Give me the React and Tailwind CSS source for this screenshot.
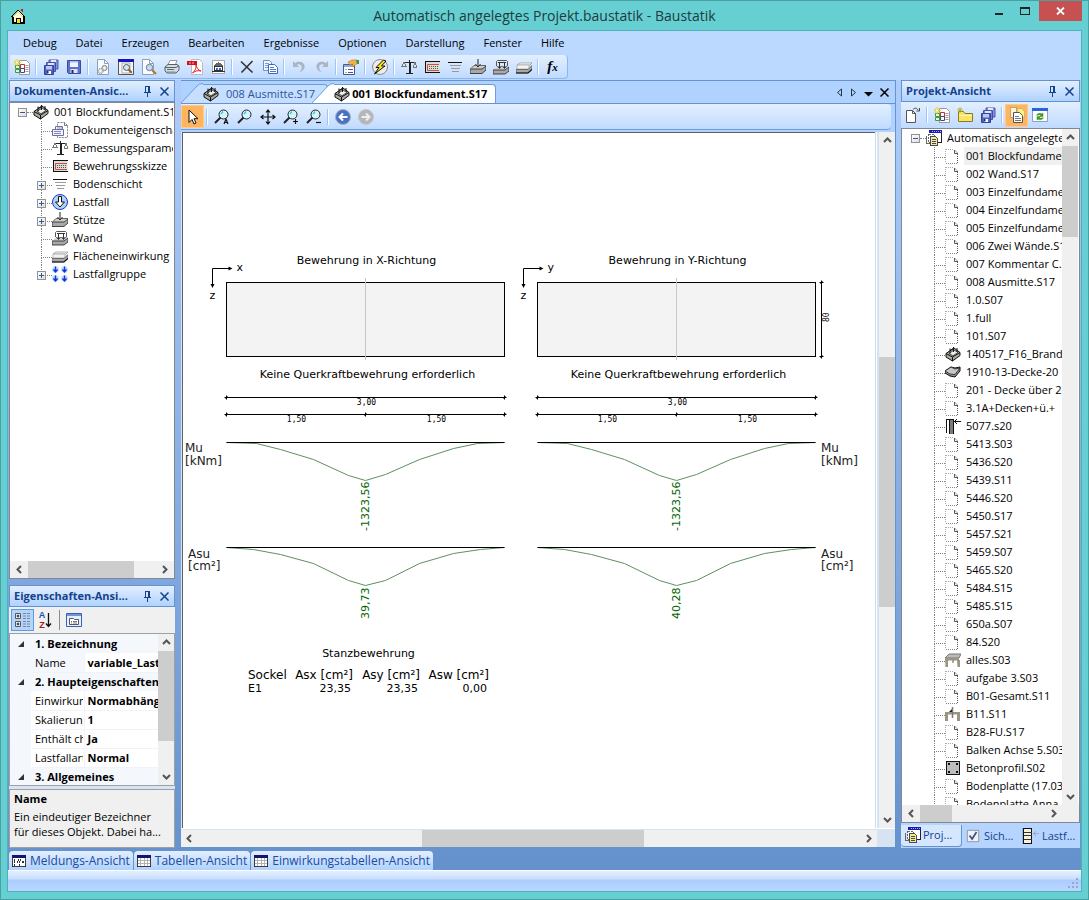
import { Fragment } from "react";

const Icon = ({ children, size = 16 }) => (
  <svg width={size} height={size} viewBox="0 0 16 16" className="shrink-0" aria-hidden="true">
    {children}
  </svg>
);

const icons = {
  house: (
    <g shapeRendering="crispEdges">
      <path d="M2 9L8 3l6 6v6H3V9z" fill="#fffbe0" />
      <path d="M1 9L8 2l7 7M3 8v7h11V8" fill="none" stroke="#000" strokeWidth="1.3" />
      <path d="M2.500 9.500L8 4l5.500 5.500" fill="none" stroke="#f4e13c" strokeWidth="1" />
      <path d="M11 1h2v4l-2-2z" fill="#e01010" />
      <path d="M6 10h4v5H6z" fill="#f8e000" stroke="#000" />
    </g>
  ),
  newDoc: (
    <g>
      <path d="M5.500 1.500h7l3 3v11h-10z" fill="#fff" stroke="#999" />
      <path d="M11.500 6.500h3M11.500 8.500h3M11.500 10.500h3M11.500 12.500h3" stroke="#999" />
      <path d="M1.500 6.500h4v3h-4zM1.500 10.500h4v3h-4z" fill="#e9f6e4" stroke="#3f9a3a" />
      <path d="M6.500 5.500h4v4h-4z" fill="#fff" stroke="#b33" />
      <path d="M6.500 9.500h4v4h-4z" fill="#f4f5ff" stroke="#447" />
      <path d="M3 0v7M0 3.500h7M.5 1l5 5M5.500 1l-5 5" stroke="#e6d21a" />
      <circle cx="3" cy="3.500" r="1" fill="#fff" />
    </g>
  ),
  saveAll: (
    <g>
      <path d="M6 1h9v9H6z" fill="#8592dd" stroke="#4a57aa" />
      <path d="M8 1h5v3H8z" fill="#e7ebfb" />
      <path d="M3.500 3.500h9v9h-9z" fill="#7583d4" stroke="#4350a4" />
      <path d="M5 4h6v3H5z" fill="#dfe5fa" />
      <path d="M1.500 6.500h9v9h-9z" fill="#4f60bd" stroke="#354194" />
      <path d="M3 7h6v3.500H3z" fill="#b9c8f2" />
      <path d="M4 12h4v3H4z" fill="#fff" />
      <path d="M4 12h1.500v2.500H4z" fill="#222c66" />
    </g>
  ),
  save: (
    <g>
      <path d="M1.500 1.500h13v13h-12l-1-1z" fill="#5f72d2" stroke="#3c4aa4" />
      <path d="M4 2h8v6H4z" fill="#f2f4fd" />
      <path d="M4 2h8v1.500H4z" fill="#aebced" />
      <path d="M4.500 10h7v4h-7z" fill="#dfe3ef" />
      <path d="M5.500 11h2v3h-2z" fill="#222c66" />
    </g>
  ),
  docGear: (
    <g>
      <path d="M2.500.5h7l4 4v11h-11z" fill="#f8fbff" stroke="#8ca0bd" />
      <path d="M9.500.5v4h4" fill="none" stroke="#8ca0bd" />
      <circle cx="9.500" cy="9" r="2.600" fill="#d8d8d8" stroke="#8a8a8a" />
      <circle cx="9.500" cy="9" r="1" fill="#fff" />
      <circle cx="5.500" cy="12" r="2.600" fill="#d8d8d8" stroke="#8a8a8a" strokeDasharray="1.500 1" />
      <circle cx="5.500" cy="12" r="1" fill="#fff" />
    </g>
  ),
  preview: (
    <g>
      <path d="M.5.5h15v15H.5z" fill="#f4f4f4" stroke="#555" />
      <path d="M0 0h16v3H0z" fill="#1414c8" />
      <path d="M4 4h8v10H4z" fill="#fff" stroke="#aaa" />
      <circle cx="8.500" cy="8.500" r="3" fill="#cfe6f8" stroke="#555" />
      <path d="M10.700 10.700l3 3" stroke="#8a5a2a" strokeWidth="2" />
    </g>
  ),
  docFind: (
    <g>
      <path d="M1.500.5h7l4 4v11h-11z" fill="#f8fbff" stroke="#8ca0bd" />
      <path d="M8.500.5v4h4" fill="none" stroke="#8ca0bd" />
      <circle cx="8.500" cy="8.500" r="3.200" fill="#c3dcf2" stroke="#6b7c90" />
      <path d="M11 11l4 4" stroke="#b8772c" strokeWidth="2.200" />
    </g>
  ),
  print: (
    <g>
      <path d="M6 1.500h7l-2 5H3.500z" fill="#fff" stroke="#8a9bb0" />
      <path d="M1 8l3-2.500h9L15 7v4l-3 3H3l-2-2z" fill="#d6dde6" stroke="#56616f" />
      <path d="M1 8.500h11L15 6.500" fill="none" stroke="#56616f" />
      <path d="M3 10.500h7" stroke="#4d7b3e" />
      <path d="M2.500 13h9" stroke="#7f8894" />
    </g>
  ),
  pdf: (
    <g>
      <path d="M4.500.5h8l3 3v12h-11z" fill="#fff" stroke="#b9b9c9" />
      <path d="M0 2h10v4H0z" fill="#d4141a" />
      <path d="M2 4h6" stroke="#f6b0b0" strokeDasharray="2 1" />
      <path d="M9 6c1 3 2 5 5 6-3-.8-6 0-8.500 2C8 12 9.500 9 9 6z" fill="none" stroke="#e02020" />
    </g>
  ),
  printHouse: (
    <g shapeRendering="crispEdges">
      <path d="M2.500 1.500h12v13h-12z" fill="#fff" stroke="#aaa" />
      <path d="M3 7l5.500-4L14 7z" fill="#666" />
      <path d="M4.500 7.500h8v4h-8z" fill="#fff" stroke="#333" />
      <path d="M6 9h2v2H6zM9 9h2v2H9z" fill="#3567e0" />
      <path d="M2 12h13v1H2z" fill="#333" />
    </g>
  ),
  cut: <path d="M2 2.500l11.500 11M13.500 2L2.500 13.500" stroke="#333" strokeWidth="1.600" />,
  copy: (
    <g>
      <path d="M1.500 1.500h6l2 2v8h-8z" fill="#f0f6ff" stroke="#6f8fc7" />
      <path d="M3 4.500h4M3 6.500h4M3 8.500h3" stroke="#7c9bd2" />
      <path d="M6.500 5.500h6l3 3v6h-9z" fill="#fafdff" stroke="#3e66b4" />
      <path d="M8 8.500h4M8 10.500h6M8 12.500h6" stroke="#4f79c6" />
    </g>
  ),
  undo: (
    <path d="M2 2v6h6L5.800 5.800C8 4.500 10.800 5.500 10.800 8.200c0 2.300-1.200 3.800-3 5.300 4-1.200 5.800-3.300 5.800-6 0-4-5.600-6.200-9.400-3.300z" fill="#a9b4c4" />
  ),
  redo: (
    <path d="M14 2v6H8l2.200-2.200C8 4.500 5.200 5.500 5.200 8.200c0 2.300 1.200 3.800 3 5.300-4-1.200-5.800-3.300-5.800-6 0-4 5.600-6.200 9.400-3.300z" fill="#a9b4c4" />
  ),
  props: (
    <g>
      <path d="M.5 5.500h11v10H.5z" fill="#fff" stroke="#44588c" />
      <path d="M1 6h10v2H1z" fill="#8fa9dc" />
      <path d="M2.500 10.500h1M2.500 13.500h1M5 10.500h5M5 13.500h5" stroke="#44588c" />
      <path d="M5 3l4-2h5l1 3-3 2-2 2-1-1 1-2-3 1z" fill="#f0b34c" stroke="#b0762a" strokeWidth=".6" />
      <path d="M13 1h3v4h-2z" fill="#42963f" />
    </g>
  ),
  flash: (
    <g>
      <circle cx="8" cy="8" r="7.500" fill="#ececec" stroke="#8b8b8b" />
      <path d="M11.500 1L4 8.500h3L2.500 15 13 7H9.500L14 2z" fill="#ffe11a" stroke="#111" />
    </g>
  ),
  scale: (
    <g shapeRendering="crispEdges" fill="none" stroke="#222">
      <path d="M3 3.500h11M8.500 1v13M5 14.500h7" strokeWidth="1" />
      <path d="M9.500 3v11" />
      <path d="M3 3.500L1 7M3 3.500L5 7M0 7.500h6" stroke="#777" />
      <path d="M14 3.500L12 8M14 3.500L16 8M12 8.500h4" stroke="#777" />
    </g>
  ),
  rebar: (
    <g>
      <path d="M1.500 2.500h14v11h-14z" fill="#dcdcd6" />
      <path d="M1 2.500h15M1 13.500h15M1.500 2v12" stroke="#111" fill="none" />
      <path d="M15 5.500H3.500v6H15" stroke="#c8503c" fill="none" />
      <path d="M5 7.500h10M5 9.500h10" stroke="#555" strokeDasharray="1 1" />
    </g>
  ),
  layers: (
    <g shapeRendering="crispEdges">
      <path d="M1 3.500h14" stroke="#111" />
      <path d="M3 6.500h11M4 9.500h9M5 12.500h7" stroke="#999" />
    </g>
  ),
  column: (
    <g>
      <path d="M0 10l4-4h12l-4 4z" fill="#cdcdcd" />
      <path d="M0 10h12l4-3v4l-4 3.500H0z" fill="#a8a8a8" stroke="#222" strokeWidth=".8" />
      <path d="M1 9.500l3-3h12" fill="none" stroke="#666" />
      <path d="M8 0v8M5.500 5L8 8l2.500-3" stroke="#222" fill="#fff" />
    </g>
  ),
  wall: (
    <g>
      <path d="M0 11l5-4h11l-4 4z" fill="#cdcdcd" />
      <path d="M0 11h12l4-3v4l-4 3H0z" fill="#a8a8a8" stroke="#222" strokeWidth=".8" />
      <path d="M3.500 7V2.500l1-1h9l1 1V7" fill="none" stroke="#555" />
      <path d="M5 3.500h8M6.500 4v5M4.500 7l2 2.500L8.500 7M11.500 4v5M9.500 7l2 2.500 2-2.500" fill="none" stroke="#333" />
    </g>
  ),
  area: (
    <g>
      <path d="M1 6l3-2h12l-2 2z" fill="#fff" stroke="#999" strokeWidth=".8" />
      <path d="M1 6h12v4H1z" fill="#f2f2f2" stroke="#aaa" strokeWidth=".8" />
      <path d="M0 10.500h12l4-4v3.500l-4 4H0z" fill="#a8a8a8" stroke="#555" strokeWidth=".8" />
      <path d="M0 14h12l4-3.500" fill="none" stroke="#111" strokeWidth="1.200" />
    </g>
  ),
  block: (
    <g>
      <path d="M1 7.500L9 2l6 4.500v3L7.500 15 1 11z" fill="#a8a8a0" stroke="#111" />
      <path d="M1 7.500L7.500 11 15 6.500M7.500 11v4" stroke="#111" fill="none" />
      <path d="M4 7.500L9 4l4 2.500-5 3.200z" fill="#f0f0ea" stroke="#333" strokeWidth=".8" />
      <path d="M5 2.500v5M8.500 1v5M12 2v4M5 4.500l3.500-2" stroke="#111" strokeWidth="1" />
    </g>
  ),
  docProps: (
    <g>
      <path d="M5.500.5h7l3 3v12h-10z" fill="#fff" stroke="#888" strokeDasharray="2 1" />
      <path d="M12.500.5v3h3" fill="none" stroke="#777" />
      <path d="M3.500 4.500h7v3h-7z" fill="#fff" stroke="#6a6fa0" />
      <path d="M.5 7.500h11v6H.5z" fill="#f2f3ff" stroke="#6a6fa0" />
      <path d="M2 9.500h7M2 11.500h7M5 6h5" stroke="#8388bc" />
    </g>
  ),
  load: (
    <g>
      <circle cx="8" cy="8" r="7.500" fill="#aed2f8" stroke="#2438c8" />
      <path d="M6.500 2.500h3V8h3L8 13 3.500 8h3z" fill="#fff" stroke="#111" />
    </g>
  ),
  loadGroup: (
    <g>
      {[[3.500, 3.500], [12.500, 3.500], [3.500, 12.500], [12.500, 12.500]].map(([x, y]) => (
        <g key={`${x}-${y}`}>
          <circle cx={x} cy={y} r="3.300" fill="#b9dcff" />
          <path d={`M${x} ${y - 3}v5M${x - 2} ${y}l2 2.500 2-2.500`} fill="none" stroke="#1830d8" strokeWidth="1.300" />
        </g>
      ))}
    </g>
  ),
  pointer: <path d="M4 1v12.500l3-3 2 4.500 2-1-2-4.300h4z" fill="#fff" stroke="#111" />,
  move: (
    <path d="M8 1.500v13M1.500 8h13M6 3.500l2-2.500 2 2.500M6 12.500L8 15l2-2.500M3.500 6L1 8l2.500 2M12.500 6L15 8l-2.500 2" fill="none" stroke="#111" strokeWidth="1.200" />
  ),
  back: (
    <g>
      <circle cx="8" cy="8" r="7.500" fill="#4a72c4" stroke="#a8aebb" />
      <path d="M12.500 8H5M8 4.500L4.500 8 8 11.500" fill="none" stroke="#fff" strokeWidth="2" />
    </g>
  ),
  forward: (
    <g>
      <circle cx="8" cy="8" r="7.500" fill="#b4b6ba" stroke="#c4c6ca" />
      <path d="M3.500 8H11M8 4.500L11.500 8 8 11.500" fill="none" stroke="#eee" strokeWidth="2" />
    </g>
  ),
  openDoc: (
    <g>
      <path d="M1.500 3.500h6l3 3v9h-9z" fill="#fff" stroke="#555" />
      <path d="M7.500 3.500v3h3" fill="none" stroke="#555" />
      <path d="M8 2.500c2-2 4-1.500 5 .5M14.500 1v3h-3" fill="none" stroke="#444" />
    </g>
  ),
  newFolder: (
    <g>
      <path d="M1.500 4.500h5l1.500 2h7.500v8h-14z" fill="#f7e468" stroke="#8d7a1c" />
      <path d="M2 8.500h13" stroke="#fff6b0" />
      <path d="M3 0v6M0 3h6M1 1l4 4M5 1L1 5" stroke="#b8ab2b" strokeWidth=".8" />
    </g>
  ),
  docs: (
    <g>
      <path d="M1.500.5h6v10h-6z" fill="#fff3c8" stroke="#777" strokeDasharray="1 1" />
      <path d="M8.500 1.500h4l3 3v6h-7z" fill="#fff27a" stroke="#999" strokeDasharray="1 1" />
      <path d="M4.500 5.500h6l3 3v7h-9z" fill="#fff" stroke="#555" />
      <path d="M6 9.500h4M6 11.500h6M6 13.500h6" stroke="#777" />
    </g>
  ),
  refresh: (
    <g>
      <path d="M.5 1.500h15v13H.5z" fill="#fff" stroke="#8aa0cc" />
      <path d="M0 1h16v3H0z" fill="#2f62d6" />
      <path d="M4.500 8.500C5 6.500 8 5.500 10 7l1-1v3.500H7.500L9 8M11.500 10.500c-.5 2-3.500 3-5.500 1.500l-1 1V9.500h3.500L7 11" fill="#3b9a1e" stroke="#3b9a1e" strokeWidth=".5" />
    </g>
  ),
  project: (
    <g shapeRendering="crispEdges">
      <path d="M3 .5h13v11H3z" fill="#fff" />
      <path d="M15.500 0v12H11" fill="none" stroke="#222" />
      <path d="M3 0h13v3H3z" fill="#1a1ab4" />
      <path d="M6 1.500h9" stroke="#9db4ff" strokeDasharray="1 1" />
      <path d="M2.500 4.500h6v8h-6z" fill="#fff" stroke="#666" strokeDasharray="2 1" />
      <path d="M4.500 6.500h5l2 2v7h-7z" fill="#f7f06a" stroke="#44447a" />
      <path d="M6 9.500h4M6 11.500h4M6 13.500h4" stroke="#44447a" />
      <path d="M.5 6v7.500H4" stroke="#666" fill="none" />
    </g>
  ),
  file: (
    <g fill="none">
      <path d="M.5 1v14" stroke="#aaa" strokeDasharray="1 1" />
      <path d="M1 1.500h8" stroke="#aaa" strokeDasharray="1 1" />
      <path d="M1 15.500h12" stroke="#888" strokeDasharray="1 1" />
      <path d="M12.500 6v9" stroke="#555" strokeDasharray="1 1" />
      <path d="M9.500 2l3 3" stroke="#999" />
      <path d="M9.500 2v3.500H13" stroke="#555" />
    </g>
  ),
  slab: (
    <g>
      <path d="M0 7l6-4 4 1 5-1v4l-5 6-5-1-5-3z" fill="#8d8d8d" stroke="#111" />
      <path d="M0 7l5 3 5 .5L15 4l-5 1-4-2z" fill="#c6c6c6" stroke="#222" strokeWidth=".8" />
    </g>
  ),
  post: (
    <g shapeRendering="crispEdges">
      <path d="M1.500 1v14" stroke="#111" />
      <path d="M4 1h4v15H4z" fill="#7a7a7a" stroke="#111" />
      <path d="M2 1.500h2M9 3.500h7M9 3.500l3-2M9 3.500l3 2" stroke="#111" />
    </g>
  ),
  frame: (
    <g>
      <path d="M0 6l4-4h12l-2 4z" fill="#bbb" stroke="#777" />
      <path d="M0 6h14v2.500H3V15H.5zM12 8h3v7h-2.500" fill="#9b9684" />
      <path d="M8 8v3" stroke="#555" />
    </g>
  ),
  frameArrow: (
    <g>
      <path d="M0 6h15v9h-3V8.500H3V15H0z" fill="#9b9684" />
      <path d="M4 6l4-4v4z" fill="#111" />
      <path d="M7.500 1v11" stroke="#777" strokeWidth="1.500" />
    </g>
  ),
  profile: (
    <g shapeRendering="crispEdges">
      <path d="M1.500 1.500h13v13h-13z" fill="#bdbdbd" stroke="#111" />
      <path d="M3 3h2v2H3zM11 3h2v2h-2zM3 11h2v2H3zM11 11h2v2h-2z" fill="#111" />
    </g>
  ),
  check: (
    <g>
      <path d="M1.500 1.500h13v13h-13z" fill="#eef2f8" stroke="#8a8f98" />
      <path d="M4 7.500l3 4 5-8" fill="none" stroke="#3c4f86" strokeWidth="2" />
    </g>
  ),
  loads: (
    <g shapeRendering="crispEdges">
      <path d="M.5.5h8v15h-8z" fill="#f6f1d8" stroke="#111" />
      <path d="M1 4.500h8M1 7.500h8M1 11.500h8" stroke="#333" strokeWidth="1.500" />
      <path d="M10 5.500h6M10 5.500l3-2M10 5.500l3 2" stroke="#9aa7bd" />
    </g>
  ),
  messages: (
    <g shapeRendering="crispEdges">
      <path d="M.5 1.500h15v13H.5z" fill="#fff" stroke="#222" />
      <path d="M0 1h16v3H0z" fill="#14146e" />
      <path d="M2 6.500h3M7 6.500h3M12 6.500h2M2 9.500h2M6 9.500h3M11 9.500h3M2 12.500h4M8 12.500h2M12 12.500h2" stroke="#333" strokeWidth="2" strokeDasharray="1 1" />
    </g>
  ),
  table: (
    <g shapeRendering="crispEdges">
      <path d="M.5 1.500h15v13H.5z" fill="#fff" stroke="#222" />
      <path d="M0 1h16v3H0z" fill="#14146e" />
      <path d="M4.500 4v10M8.500 4v10M12.500 4v10M1 7.500h14M1 10.500h14" stroke="#aaa" />
    </g>
  ),
  category: (
    <g>
      <path d="M.5 1.500h5v5h-5zM.5 9.500h5v5h-5z" fill="#fff" stroke="#556" />
      <path d="M1.500 4h3M3 2.500v3M1.500 12h3M3 10.500v3" stroke="#111" />
      <path d="M8 1.500h3M12 1.500h3M8 4h3M12 4h3M8 6.500h3M12 6.500h3M8 9.500h3M12 9.500h3M8 12h3M12 12h3M8 14.500h3M12 14.500h3" stroke="#7785a8" />
    </g>
  ),
  page: (
    <g>
      <path d="M.5 1.500h15v13H.5z" fill="#e8effc" stroke="#3a5fb4" />
      <path d="M1 2h14v2H1z" fill="#6f95de" />
      <path d="M3.500 6.500h4l1 1h4v5h-9z" fill="#fff" stroke="#556" />
      <path d="M5 9.500h1M7 9.500h4M5 11h1M7 11h4" stroke="#556" strokeWidth=".8" />
    </g>
  ),
};

const Lens = ({ mark }) => (
  <Icon>
    <circle cx="9.500" cy="5.500" r="4.500" fill="#d4f4fa" stroke="#222" />
    <path d="M7 5l2-2.500" stroke="#3cc8dc" strokeWidth="1.500" />
    <path d="M6.500 8.500L1 14" stroke="#222" strokeWidth="2" />
    {mark && <path d={mark} fill="none" stroke="#111" strokeWidth="1.200" />}
  </Icon>
);

const lensMarks = {
  all: "M10 15l2-5 2 5M11 13.500h2.500",
  none: "",
  plus: "M12.500 10v5M10 12.500h5",
  minus: "M10 13.500h5",
};

const ToolButton = ({ label, active, children }) => (
  <button
    type="button"
    aria-label={label}
    className={`flex h-[23px] w-[23px] shrink-0 items-center justify-center ${
      active ? "bg-[#ffb45e] border border-[#ffc98a]" : "hover:bg-[#ffe3a8]"
    }`}
  >
    {children}
  </button>
);

const Separator = () => (
  <div className="flex h-4 w-[6px] shrink-0 justify-center">
    <div className="w-px bg-[#9ac6ff]" />
    <div className="w-px bg-white" />
  </div>
);

const Tools = ({ groups, active }) =>
  groups.map((group, i) => (
    <Fragment key={i}>
      {i > 0 && <Separator />}
      {group.map(([name, label]) => (
        <ToolButton key={label} label={label} active={active === name}>
          {name === "fx" ? (
            <span className="font-['Liberation_Serif',serif] text-[15px] leading-4 font-bold italic">
              f<span className="text-[11px]">x</span>
            </span>
          ) : name in lensMarks ? (
            <Lens mark={lensMarks[name]} />
          ) : (
            <Icon>{icons[name]}</Icon>
          )}
        </ToolButton>
      ))}
    </Fragment>
  ));

const mainTools = [
  [["newDoc", "Neu"]],
  [["saveAll", "Alle speichern"], ["save", "Speichern"]],
  [
    ["docGear", "Seite einrichten"],
    ["preview", "Vorschau"],
    ["docFind", "Seitenansicht"],
    ["print", "Drucken"],
    ["pdf", "PDF"],
    ["printHouse", "Viewer"],
  ],
  [["cut", "Löschen"], ["copy", "Kopieren"]],
  [["undo", "Rückgängig"], ["redo", "Wiederholen"]],
  [["props", "Eigenschaften"]],
  [["flash", "Berechnen"]],
  [
    ["scale", "Bemessung"],
    ["rebar", "Bewehrung"],
    ["layers", "Bodenschicht"],
    ["column", "Stütze"],
    ["wall", "Wand"],
    ["area", "Fläche"],
  ],
  [["fx", "Formel"]],
];

const viewTools = [
  [["pointer", "Auswahl"]],
  [
    ["all", "Alles zeigen"],
    ["none", "Zoom"],
    ["move", "Verschieben"],
    ["plus", "Vergrößern"],
    ["minus", "Verkleinern"],
  ],
  [["back", "Zurück"], ["forward", "Vor"]],
];

const projectTools = [
  [["openDoc", "Öffnen"]],
  [["newDoc", "Neues Dokument"], ["newFolder", "Neuer Ordner"], ["saveAll", "Projekt speichern"]],
  [["docs", "Alle Dokumente"], ["refresh", "Aktualisieren"]],
];

const menus = ["Debug", "Datei", "Erzeugen", "Bearbeiten", "Ergebnisse", "Optionen", "Darstellung", "Fenster", "Hilfe"];

const arrows = {
  left: "M6 1L2.500 4.500 6 8",
  right: "M3 1l3.500 3.500L3 8",
  up: "M1 6l3.500-3.500L8 6",
  down: "M1 3l3.500 3.500L8 3",
};

const ScrollArrow = ({ dir }) => (
  <button type="button" aria-label={dir} className="flex h-[17px] w-[17px] shrink-0 items-center justify-center">
    <svg width="9" height="9" viewBox="0 0 9 9">
      <path d={arrows[dir]} fill="none" stroke="#555" strokeWidth="2" />
    </svg>
  </button>
);

const ScrollBar = ({ vertical, parts }) => (
  <div className={`flex shrink-0 bg-[#f0f0f0] ${vertical ? "w-4 flex-col items-center" : "h-[17px] items-center"}`}>
    <ScrollArrow dir={vertical ? "up" : "left"} />
    <div className={`flex min-h-0 min-w-0 flex-1 self-stretch ${vertical ? "flex-col" : ""}`}>
      <div style={{ flexGrow: parts[0] }} />
      <div className="bg-[#cdcdcd]" style={{ flexGrow: parts[1] }} />
      <div style={{ flexGrow: parts[2] }} />
    </div>
    <ScrollArrow dir={vertical ? "down" : "right"} />
  </div>
);

const PanelHeader = ({ title }) => (
  <div className="flex h-[22px] shrink-0 items-center border border-[#6593cf] bg-linear-to-b from-[#e3efff] to-[#afd2ff] pl-1 text-[#15428b]">
    <h2 className="flex-1 truncate text-[11px] font-bold">{title}</h2>
    <button type="button" aria-label="Anheften" className="mr-2">
      <svg width="9" height="11" viewBox="0 0 9 11" fill="none" stroke="currentColor" shapeRendering="crispEdges">
        <path d="M2.500 6V.5h4V6M5.500 1v5M1 6.500h7M4.500 7v4" />
      </svg>
    </button>
    <button type="button" aria-label="Schließen" className="mr-[5px]">
      <svg width="9" height="9" viewBox="0 0 9 9" fill="none" stroke="currentColor" strokeWidth="1.500">
        <path d="M.5.5l8 8M8.500.5l-8 8" />
      </svg>
    </button>
  </div>
);

const Toggle = ({ open, name }) => (
  <button
    type="button"
    aria-label={`${name} ${open ? "zuklappen" : "aufklappen"}`}
    className="flex h-[9px] w-[9px] shrink-0 items-center justify-center border border-[#919191] bg-linear-to-br from-white to-[#dedede]"
  >
    <svg width="5" height="5" viewBox="0 0 5 5" stroke="#3b56a0" shapeRendering="crispEdges">
      <path d={open ? "M0 2.500h5" : "M0 2.500h5M2.500 0v5"} />
    </svg>
  </button>
);

const TreeRoot = ({ icon, name }) => (
  <div className="flex h-[18px] items-center">
    <Toggle open name={name} />
    <div className="w-[6px] shrink-0 border-t border-dotted border-[#808080]" />
    <Icon>{icons[icon]}</Icon>
    <span className="pl-[5px] whitespace-nowrap">{name}</span>
  </div>
);

const TreeItem = ({ icon, name, expandable, selected, last }) => (
  <li className="flex h-[18px] items-center">
    <div className="relative h-full w-[11px] shrink-0">
      <div className="h-[11px] border-b border-l border-dotted border-[#808080]" />
      {!last && <div className="h-[7px] border-l border-dotted border-[#808080]" />}
      {expandable && (
        <div className="absolute top-[6px] -left-1">
          <Toggle name={name} />
        </div>
      )}
    </div>
    <Icon>{icons[icon]}</Icon>
    <span className={`ml-[3px] flex h-full flex-1 items-center pl-[2px] whitespace-nowrap ${selected ? "bg-[#f0f0f0]" : ""}`}>
      {name}
    </span>
  </li>
);

const documentItems = [
  { icon: "docProps", name: "Dokumenteigenschaften" },
  { icon: "scale", name: "Bemessungsparameter" },
  { icon: "rebar", name: "Bewehrungsskizze" },
  { icon: "layers", name: "Bodenschicht", expandable: true },
  { icon: "load", name: "Lastfall", expandable: true },
  { icon: "column", name: "Stütze", expandable: true },
  { icon: "wall", name: "Wand" },
  { icon: "area", name: "Flächeneinwirkung" },
  { icon: "loadGroup", name: "Lastfallgruppe", expandable: true },
];

const projectFiles = [
  "001 Blockfundament.S17",
  "002 Wand.S17",
  "003 Einzelfundament.S17",
  "004 Einzelfundament.S17",
  "005 Einzelfundament.S17",
  "006 Zwei Wände.S17",
  "007 Kommentar C.S17",
  "008 Ausmitte.S17",
  "1.0.S07",
  "1.full",
  "101.S07",
  "140517_F16_Brand",
  "1910-13-Decke-20",
  "201 - Decke über 2",
  "3.1A+Decken+ü.+",
  "5077.s20",
  "5413.S03",
  "5436.S20",
  "5439.S11",
  "5446.S20",
  "5450.S17",
  "5457.S21",
  "5459.S07",
  "5465.S20",
  "5484.S15",
  "5485.S15",
  "650a.S07",
  "84.S20",
  "alles.S03",
  "aufgabe 3.S03",
  "B01-Gesamt.S11",
  "B11.S11",
  "B28-FU.S17",
  "Balken Achse 5.S03",
  "Betonprofil.S02",
  "Bodenplatte (17.03",
  "Bodenplatte Anna",
];

const fileIcons = {
  "140517_F16_Brand": "block",
  "1910-13-Decke-20": "slab",
  "5077.s20": "post",
  "alles.S03": "frame",
  "B11.S11": "frameArrow",
  "Betonprofil.S02": "profile",
};

const propertyRows = [
  { category: "1. Bezeichnung" },
  { name: "Name", value: "variable_Last", selected: true },
  { category: "2. Haupteigenschaften" },
  { name: "Einwirkung", value: "Normabhängig" },
  { name: "Skalierung", value: "1" },
  { name: "Enthält ch", value: "Ja" },
  { name: "Lastfallart", value: "Normal" },
  { category: "3. Allgemeines" },
];

const DocumentPanel = () => (
  <section className="flex min-h-0 flex-1 flex-col">
    <PanelHeader title="Dokumenten-Ansic..." />
    <div className="flex min-h-0 flex-1 flex-col border border-[#828790] bg-white">
      <div className="min-h-0 flex-1 overflow-hidden pr-px pl-2">
        <div className="h-full overflow-hidden">
          <TreeRoot icon="block" name="001 Blockfundament.S17" />
          <ul className="pl-[23px]">
            {documentItems.map((item, i) => (
              <TreeItem key={item.name} {...item} last={i === documentItems.length - 1} />
            ))}
          </ul>
        </div>
      </div>
      <div className="bg-[#f0f0f0] px-px">
        <ScrollBar parts={[0, 107, 22]} />
      </div>
    </div>
  </section>
);

const PropertyPanel = () => (
  <section className="flex shrink-0 flex-col">
    <PanelHeader title="Eigenschaften-Ansi..." />
    <div className="flex h-[26px] items-center bg-[#f0f0f0] pl-[2px]">
      <button type="button" aria-label="Nach Kategorien" className="flex h-[22px] w-[23px] items-center justify-center border border-[#5b9be8] bg-[#b4d5f8]">
        <Icon>{icons.category}</Icon>
      </button>
      <button type="button" aria-label="Alphabetisch" className="flex w-[23px] items-center justify-center">
        <span className="font-['Liberation_Sans',sans-serif] text-[9px] leading-[10px] font-bold">
          <span className="block text-[#1f4fb8]">A</span>
          <span className="block text-[#a52020]">Z</span>
        </span>
        <svg width="7" height="15" viewBox="0 0 7 15">
          <path d="M3.500 0v13M1 10.500l2.500 3 2.500-3" fill="none" stroke="#111" strokeWidth="1.300" />
        </svg>
      </button>
      <div className="mr-[2px] ml-[2px] h-5 w-px bg-[#8c8c8c]" />
      <ToolButton label="Eigenschaftenseiten">
        <Icon>{icons.page}</Icon>
      </ToolButton>
    </div>
    <div className="flex h-[153px] overflow-hidden border border-[#a0a0a0] bg-white">
      <div className="min-w-0 flex-1 overflow-hidden">
        <table className="w-full table-fixed border-collapse">
          <colgroup>
            <col className="w-[21px]" />
            <col className="w-[53px]" />
            <col />
          </colgroup>
          <tbody>
            {propertyRows.map((row) =>
              row.category ? (
                <tr key={row.category} className="h-[19px] bg-[#f4f7fc]">
                  <td className="p-0">
                    <svg width="6" height="6" viewBox="0 0 6 6" className="ml-2">
                      <path d="M6 0v6H0z" fill="#333" />
                    </svg>
                  </td>
                  <th colSpan={2} className="overflow-hidden p-0 pl-1 text-left whitespace-nowrap">
                    {row.category}
                  </th>
                </tr>
              ) : (
                <tr key={row.name} className="h-[19px]">
                  <td className="bg-[#f4f7fc] p-0" />
                  <td className={`overflow-hidden border-b border-[#f0f4fa] p-0 pt-px whitespace-nowrap ${row.selected ? "bg-[#f4f7fc]" : ""}`}>
                    <div className="ml-1 w-[48px] overflow-hidden">{row.name}</div>
                  </td>
                  <td className="overflow-hidden border-b border-l border-[#f0f4fa] p-0 pt-px pl-[3px] font-bold whitespace-nowrap">
                    {row.value}
                  </td>
                </tr>
              )
            )}
          </tbody>
        </table>
      </div>
      <ScrollBar vertical parts={[0, 91, 27]} />
    </div>
    <div className="h-[3px] bg-[#d6e4f7]" />
    <div className="h-[59px] border border-[#a0a0a0] bg-[#f0f0f0] px-1 pt-px">
      <h3 className="leading-4 font-bold">Name</h3>
      <p className="pt-[2px] leading-[15px] whitespace-nowrap">
        Ein eindeutiger Bezeichner
        <br />
        für dieses Objekt. Dabei ha...
      </p>
    </div>
  </section>
);

const ProjectPanel = () => (
  <aside className="flex w-[179px] shrink-0 flex-col">
    <PanelHeader title="Projekt-Ansicht" />
    <div className="flex h-[26px] shrink-0 items-center bg-linear-to-b from-[#e3efff] to-[#c0dbff]">
      <Tools groups={projectTools} active="docs" />
    </div>
    <div className="flex min-h-0 flex-1 flex-col border border-[#828790] bg-white">
      <div className="flex min-h-0 flex-1 pr-px">
        <div className="min-w-0 flex-1 overflow-hidden pl-[9px]">
          <TreeRoot icon="project" name="Automatisch angelegtes Projekt" />
          <ul className="pl-[23px]">
            {projectFiles.map((name, i) => (
              <TreeItem key={name} name={name} icon={fileIcons[name] || "file"} selected={i === 0} />
            ))}
          </ul>
        </div>
        <ScrollBar vertical parts={[0, 91, 549]} />
      </div>
      <div className="bg-[#f0f0f0] pr-[17px] pl-px">
        <ScrollBar parts={[0, 32, 92]} />
      </div>
    </div>
    <div role="tablist" className="flex h-[25px] shrink-0 items-center bg-[#b5d4ff] text-[#15428b]">
      <button type="button" role="tab" aria-selected="true" className="flex h-[22px] w-[61px] items-center gap-[2px] rounded-b-sm border-r border-b border-[#6593cf] bg-[#d5e6ff] pl-1">
        <Icon>{icons.project}</Icon>
        Proj...
      </button>
      <button type="button" role="tab" className="flex w-[60px] items-center gap-1 pl-1">
        <Icon size={14}>{icons.check}</Icon>
        Sich...
      </button>
      <button type="button" role="tab" className="flex flex-1 items-center gap-[3px] border-l border-[#8fb4e6]">
        <Icon>{icons.loads}</Icon>
        Lastf...
      </button>
    </div>
  </aside>
);

const Slant = ({ fill }) => (
  <svg width="22" height="20" viewBox="0 0 22 20" className="shrink-0">
    <path d="M0 20L16 3q2-2.500 6-2.500V20z" fill={fill} />
    <path d="M0 20L16 3q2-2.500 6-2.500" fill="none" stroke="#6f9ddb" />
  </svg>
);

const mu = [[0, 0], [30, 1], [54, 7], [87, 17], [122, 33], [139, 38], [159, 32], [193, 17], [227, 6], [251, 1], [278, 0]];
const asu = [[0, 0], [27, 2], [54, 7], [87, 16], [122, 33], [139, 38], [159, 33], [193, 16], [227, 6], [254, 2], [278, 0]];

const toPoints = (curve, x, y) => curve.map(([dx, dy]) => `${x + dx},${y + dy}`).join(" ");

const Tick = ({ x, y }) => <path d={`M${x - 2} ${y}h4M${x} ${y - 2}v4M${x - 1} ${y + 1}l2-2`} stroke="#000" fill="none" />;

// One section: axes, cross section, dimension lines and the two result curves
const Section = ({ x, axis, title, moment, steel }) => (
  <g>
    <text x={x + 140} y="264" textAnchor="middle">{title}</text>
    <path d={`M${x + 4} 268.500H${x - 14}V286`} fill="none" stroke="#000" />
    <path d={`M${x + 6} 268.500l-4-2v4zM${x - 14} 288l-2-4h4z`} />
    <text x={x + 10} y="271">{axis}</text>
    <text x={x - 17} y="299">z</text>
    <rect x={x} y="282.500" width="278" height="74" fill="#f3f3f3" stroke="#000" />
    <path d={`M${x + 139} 278v82`} stroke="#c8c8c8" />
    <text x={x + 141} y="378" textAnchor="middle">Keine Querkraftbewehrung erforderlich</text>
    <path d={`M${x} 397.500h278M${x} 414.500h278`} stroke="#000" />
    <Tick x={x} y={397.5} />
    <Tick x={x + 278} y={397.5} />
    <Tick x={x} y={414.5} />
    <Tick x={x + 139} y={414.5} />
    <Tick x={x + 278} y={414.5} />
    <g className="font-['DejaVu_Sans_Mono',monospace] text-[8px]" textAnchor="middle">
      <text x={x + 140} y="405">3,00</text>
      <text x={x + 70} y="422">1,50</text>
      <text x={x + 210} y="422">1,50</text>
    </g>
    <polyline points={toPoints(mu, x, 442.5)} fill="none" stroke="#5f8f5f" />
    <path d={`M${x} 442.500h278`} stroke="#000" />
    <polyline points={toPoints(asu, x, 547.5)} fill="none" stroke="#5f8f5f" />
    <path d={`M${x} 547.500h278`} stroke="#000" />
    <g fill="#006400">
      <text transform={`translate(${x + 142} 531) rotate(-90)`}>{moment}</text>
      <text transform={`translate(${x + 142} 619) rotate(-90)`}>{steel}</text>
    </g>
  </g>
);

const Drawing = () => (
  <div className="min-w-0 flex-1 overflow-hidden border-t border-l border-[#606060] bg-white font-['DejaVu_Sans',Verdana,sans-serif] text-[11px]">
    <svg width="693" height="514" viewBox="183 133 693 514" role="img" aria-label="Bewehrungsskizze">
      <Section x={226.5} axis="x" title="Bewehrung in X-Richtung" moment="-1323,56" steel="39,73" />
      <Section x={537.5} axis="y" title="Bewehrung in Y-Richtung" moment="-1323,56" steel="40,28" />
      <g fill="#222" className="text-xs">
        <text x="185" y="452">Mu</text>
        <text x="185" y="465">[kNm]</text>
        <text x="188" y="558">Asu</text>
        <text x="188" y="570">[cm²]</text>
        <text x="821" y="452">Mu</text>
        <text x="821" y="465">[kNm]</text>
        <text x="821" y="558">Asu</text>
        <text x="821" y="570">[cm²]</text>
      </g>
      <path d="M821.500 282v75" stroke="#000" />
      <Tick x={821.5} y={282.5} />
      <Tick x={821.5} y={356.5} />
      <text transform="translate(829 322) rotate(-90)" className="font-['DejaVu_Sans_Mono',monospace] text-[8px]">80</text>
    </svg>
    <table className="ml-[65px] w-[241px] table-fixed leading-[14px]">
      <caption className="pb-[7px] leading-[14px]">Stanzbewehrung</caption>
      <thead className="text-xs leading-[14px]">
        <tr>
          <th className="w-[38px] p-0 text-left font-normal">Sockel</th>
          <th className="w-[67px] p-0 text-right font-normal">Asx [cm²]</th>
          <th className="w-[67px] p-0 text-right font-normal">Asy [cm²]</th>
          <th className="w-[69px] p-0 text-right font-normal">Asw [cm²]</th>
        </tr>
      </thead>
      <tbody>
        <tr>
          <td className="p-0">E1</td>
          <td className="p-0 pr-[2px] text-right">23,35</td>
          <td className="p-0 pr-[2px] text-right">23,35</td>
          <td className="p-0 pr-[2px] text-right">0,00</td>
        </tr>
      </tbody>
    </table>
  </div>
);

const Workspace = () => (
  <main className="flex min-w-0 flex-1 flex-col border-y border-r border-[#6593cf] bg-[#d6e4f2]">
    <div className="flex h-[23px] shrink-0 items-end border-b border-[#6593cf] bg-[#afd2ff]">
      <div role="tablist" className="flex min-w-0 flex-1">
        <button type="button" role="tab" className="flex h-[19px] items-end text-[#2b569a]">
          <Slant fill="#c6deff" />
          <span className="flex h-[19px] items-center gap-[7px] rounded-tr-sm border-t border-r border-[#6f9ddb] bg-[#c6deff] pr-3">
            <Icon>{icons.block}</Icon>
            <span className="whitespace-nowrap">008 Ausmitte.S17</span>
          </span>
        </button>
        <button type="button" role="tab" aria-selected="true" className="relative -ml-[16px] flex h-[19px] items-end">
          <Slant fill="#fff" />
          <span className="flex h-[19px] items-center gap-[2px] rounded-tr-sm border-t border-r border-[#6f9ddb] bg-white pr-2">
            <Icon>{icons.block}</Icon>
            <span className="font-bold whitespace-nowrap">001 Blockfundament.S17</span>
          </span>
        </button>
      </div>
      <div className="flex h-full items-center gap-[7px] pr-[6px]">
        <button type="button" aria-label="Vorheriges">
          <svg width="7" height="9" viewBox="0 0 7 9"><path d="M5.500 1v7l-4-3.500z" fill="none" stroke="#234" /></svg>
        </button>
        <button type="button" aria-label="Nächstes">
          <svg width="7" height="9" viewBox="0 0 7 9"><path d="M1.500 1v7l4-3.500z" fill="none" stroke="#234" /></svg>
        </button>
        <button type="button" aria-label="Dokumentliste">
          <svg width="9" height="9" viewBox="0 0 9 9"><path d="M0 4h9L4.500 8.500z" /></svg>
        </button>
        <button type="button" aria-label="Dokument schließen">
          <svg width="9" height="9" viewBox="0 0 9 9"><path d="M.5.5l8 8M8.500.5l-8 8" stroke="#000" strokeWidth="1.500" /></svg>
        </button>
      </div>
    </div>
    <div className="flex h-[28px] shrink-0 items-center bg-[#afd2ff] pr-1 pb-[2px]">
      <div className="flex h-full flex-1 items-center rounded-r-sm border-b border-[#6f9ddb] bg-linear-to-b from-[#e3efff] to-[#c0dbff]">
        <Tools groups={viewTools} active="pointer" />
      </div>
    </div>
    <div className="flex min-h-0 flex-1 border-b border-white pl-px">
      <Drawing />
      <div className="mr-[2px] w-[2px] border-l border-[#cfdceb] bg-white" />
      <ScrollBar vertical parts={[209, 252, 205]} />
    </div>
    <div className="pt-px pr-[18px]">
      <ScrollBar parts={[224, 223, 216]} />
    </div>
  </main>
);

const bottomTabs = [
  ["messages", "Meldungs-Ansicht"],
  ["table", "Tabellen-Ansicht"],
  ["table", "Einwirkungstabellen-Ansicht"],
];

export default function App() {
  return (
    <div className="flex h-screen w-full flex-col border border-[#4b9fa2] bg-[#66cfd2] px-[6px] pb-[7px] font-['Open_Sans','Noto_Sans',sans-serif] text-[11px] leading-4 text-black">
      <header className="flex h-[29px] shrink-0 items-start">
        <div className="flex w-[96px] items-center pt-[7px] pl-[3px]">
          <Icon>{icons.house}</Icon>
        </div>
        <h1 className="flex-1 truncate pt-[5px] text-center text-sm leading-5 text-[#1d3c3e]">
          Automatisch angelegtes Projekt.baustatik - Baustatik
        </h1>
        <div className="flex h-[20px] w-[96px] justify-end">
          <button type="button" aria-label="Minimieren" className="flex w-[26px] items-center justify-center">
            <span className="mt-[6px] h-[2px] w-2 bg-[#222]" />
          </button>
          <button type="button" aria-label="Maximieren" className="flex w-[28px] items-center justify-center">
            <span className="h-[8px] w-[10px] border border-t-2 border-[#222]" />
          </button>
          <button type="button" aria-label="Fenster schließen" className="flex w-11 items-center justify-center bg-[#c75050]">
            <svg width="9" height="8" viewBox="0 0 9 8">
              <path d="M1 .5l7 7M8 .5l-7 7" stroke="#fff" strokeWidth="1.800" />
            </svg>
          </button>
        </div>
      </header>

      <div className="flex min-h-0 flex-1 flex-col border border-[#50b0b8] bg-[#bbd8ff]">
        <nav className="flex h-6 shrink-0 items-center gap-[19px] pl-[15px]">
          {menus.map((menu) => (
            <button key={menu} type="button">{menu}</button>
          ))}
        </nav>
        <div className="flex h-[25px] shrink-0 pl-[2px]">
          <div className="flex h-6 items-center rounded-r-sm border-r border-b border-[#8db6ee] bg-linear-to-b from-[#e3efff] to-[#c0dbff] pr-[3px]">
            <Tools groups={mainTools} />
          </div>
        </div>

        <div className="flex min-h-0 flex-1 flex-col bg-linear-to-b from-[#aecdfd] to-[#6591cd] px-px">
          <div className="flex min-h-0 flex-1">
            <aside className="flex w-[166px] shrink-0 flex-col gap-[6px]">
              <DocumentPanel />
              <PropertyPanel />
            </aside>
            <div className="w-[6px] shrink-0" />
            <Workspace />
            <div className="w-[5px] shrink-0" />
            <ProjectPanel />
          </div>
          <div role="tablist" className="mt-[3px] flex h-[19px] shrink-0 gap-px text-xs text-[#1d4a9c]">
            {bottomTabs.map(([icon, label]) => (
              <button key={label} type="button" role="tab" className="flex items-center gap-1 rounded-t-sm bg-linear-to-b from-[#e3efff] to-[#afd2ff] px-[3px] whitespace-nowrap">
                <Icon size={14}>{icons[icon]}</Icon>
                {label}
              </button>
            ))}
          </div>
        </div>
        <footer className="flex h-[21px] shrink-0 items-end justify-end border-t border-white bg-[linear-gradient(#e3efff_0,#c9dfff_8px,#abcdfe_9px,#bbd8ff_21px)] p-[2px]">
          <svg width="11" height="11" viewBox="0 0 11 11" fill="#9aa9bd" shapeRendering="crispEdges">
            <path d="M8 0h2v2H8zM4 4h2v2H4zM8 4h2v2H8zM0 8h2v2H0zM4 8h2v2H4zM8 8h2v2H8z" />
          </svg>
        </footer>
      </div>
    </div>
  );
}
